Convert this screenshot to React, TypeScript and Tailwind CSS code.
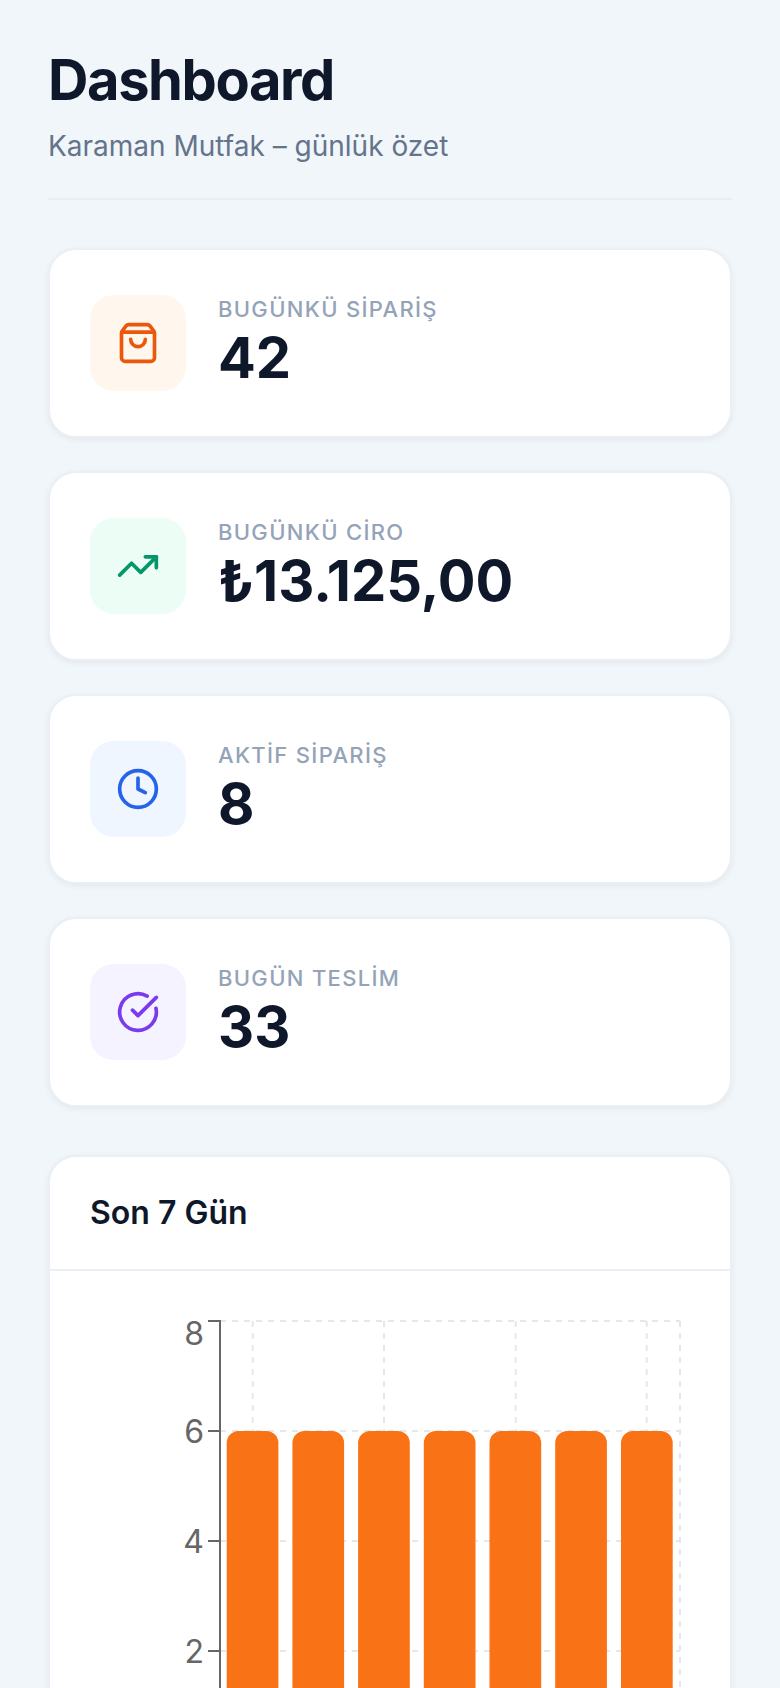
import { ShoppingBag, TrendingUp, Clock, CircleCheckBig } from "lucide-react";

const stats = [
  { label: "BUGÜNKÜ SİPARİŞ", value: "42", Icon: ShoppingBag, box: "bg-[#fff7ed]", color: "text-[#ea580c]" },
  { label: "BUGÜNKÜ CİRO", value: "₺13.125,00", Icon: TrendingUp, box: "bg-[#ecfdf5]", color: "text-[#059669]" },
  { label: "AKTİF SİPARİŞ", value: "8", Icon: Clock, box: "bg-[#eff6ff]", color: "text-[#2563eb]" },
  { label: "BUGÜN TESLİM", value: "33", Icon: CircleCheckBig, box: "bg-[#f5f3ff]", color: "text-[#7c3aed]" },
];

const barX = [176.7, 242.4, 308.1, 373.8, 439.5, 505.2, 571];
const gridY = [50, 160, 270, 380];
const gridX = [202.7, 334, 465.7, 596.7, 630];

function Chart() {
  return (
    <svg width="680" height="520" viewBox="0 0 680 520" className="block">
      {gridY.map((y) => (
        <line key={y} x1="170" x2="630" y1={y} y2={y} stroke="#e5e7eb" strokeWidth="2" strokeDasharray="6 6" />
      ))}
      {gridX.map((x) => (
        <line key={x} x1={x} x2={x} y1="50" y2="490" stroke="#e5e7eb" strokeWidth="2" strokeDasharray="6 6" />
      ))}
      {barX.map((x) => (
        <path
          key={x}
          d={`M${x} 490V172a12 12 0 0 1 12-12h27.7a12 12 0 0 1 12 12V490z`}
          fill="#f97316"
        />
      ))}
      <line x1="170" x2="170" y1="49" y2="490" stroke="#666" strokeWidth="2" />
      {gridY.map((y) => (
        <line key={y} x1="158" x2="170" y1={y} y2={y} stroke="#666" strokeWidth="2" />
      ))}
      <text x="154" y="74" textAnchor="end" fontSize="32" fill="#666">8</text>
      <text x="154" y="172" textAnchor="end" fontSize="32" fill="#666">6</text>
      <text x="154" y="282" textAnchor="end" fontSize="32" fill="#666">4</text>
      <text x="154" y="392" textAnchor="end" fontSize="32" fill="#666">2</text>
    </svg>
  );
}

export default function App() {
  return (
    <div className="h-[1688px] overflow-hidden bg-[#f1f6fa] px-12 pt-[42px] font-['Inter',sans-serif]">
      {/* Header */}
      <div className="border-b-2 border-[#e8edf2] pb-[30px]">
        <h1 className="text-[56px] leading-[76px] font-bold tracking-[-0.025em] text-[#0f172a]">Dashboard</h1>
        <p className="mt-[6px] text-[28px] leading-[44px] text-[#64748b]">Karaman Mutfak – günlük özet</p>
      </div>

      {/* Kartlar */}
      <div className="mt-[48px] flex flex-col gap-[33px]">
        {stats.map(({ label, value, Icon, box, color }) => (
          <div
            key={label}
            className="flex h-[190px] items-center gap-[32px] rounded-[28px] border-2 border-[#e9eff4] bg-white px-[40px] shadow-[0_2px_6px_rgba(15,23,42,0.06)]"
          >
            <div className={`flex h-[96px] w-[96px] items-center justify-center rounded-[24px] ${box} ${color}`}>
              <Icon size={44} strokeWidth={2} />
            </div>
            <div>
              <div className="text-[22px] leading-[30px] font-medium tracking-[0.06em] text-[#94a3b8]">{label}</div>
              <div className="text-[56px] leading-[68px] font-bold text-[#0f172a]">{value}</div>
            </div>
          </div>
        ))}
      </div>

      {/* Grafik */}
      <div className="mt-[48px] rounded-t-[28px] border-2 border-[#e9eff4] bg-white shadow-[0_2px_6px_rgba(15,23,42,0.06)]">
        <div className="border-b-2 border-[#e9eff4] px-[40px] py-[32px] text-[32px] leading-[48px] font-semibold text-[#0f172a]">
          Son 7 Gün
        </div>
        <Chart />
      </div>
    </div>
  );
}
